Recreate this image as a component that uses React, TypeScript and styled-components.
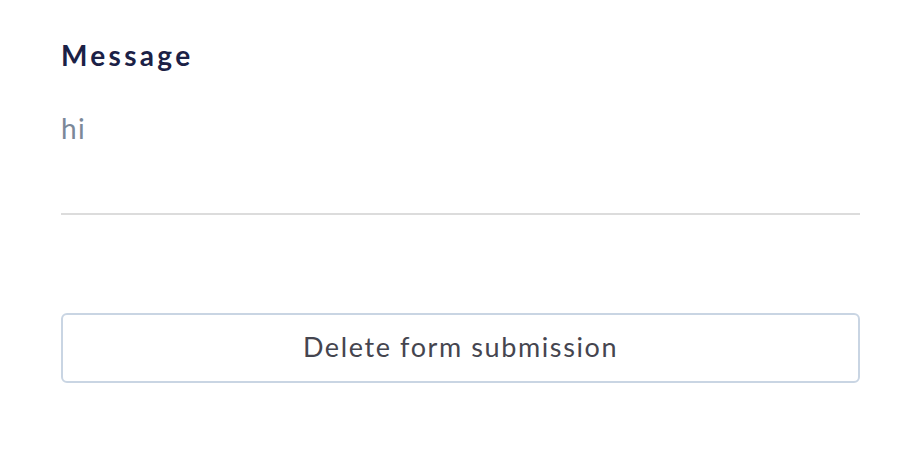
import styled, { createGlobalStyle } from "styled-components";

const GlobalStyle = createGlobalStyle`
  html, body {
    margin: 0;
    padding: 0;
    background: #ffffff;
  }
  body {
    font-family: Lato, "Open Sans", sans-serif;
  }
`;

const App = () => {
    return (
        <>
            <GlobalStyle />
            <StyledPanel>
                <StyledField>
                    <StyledLabel>Message</StyledLabel>
                    <StyledValue>hi</StyledValue>
                </StyledField>
                <StyledButton type="button">Delete form submission</StyledButton>
            </StyledPanel>
        </>
    );
};
export default App;

const StyledPanel = styled.div({
    display: "flex",
    flexDirection: "column",
    width: 799,
    padding: "38px 0 0 61px",
});

const StyledField = styled.div({
    display: "flex",
    flexDirection: "column",
    paddingBottom: 69,
    borderBottom: "2px solid #dcdcdc",
});

const StyledLabel = styled.h3({
    margin: 0,
    fontSize: 28,
    lineHeight: "34px",
    fontWeight: 700,
    letterSpacing: "3.3px",
    color: "#1b2146",
});

const StyledValue = styled.div({
    marginTop: 40,
    fontSize: 28,
    lineHeight: "32px",
    letterSpacing: "1.5px",
    color: "#7b8899",
});

const StyledButton = styled.button({
    marginTop: 98,
    height: 70,
    width: "100%",
    paddingBottom: 4,
    background: "#ffffff",
    border: "2px solid #c9d5e3",
    borderRadius: 6,
    fontFamily: "Lato, sans-serif",
    fontSize: 27,
    letterSpacing: "1.6px",
    color: "#45454f",
    cursor: "pointer",
});
